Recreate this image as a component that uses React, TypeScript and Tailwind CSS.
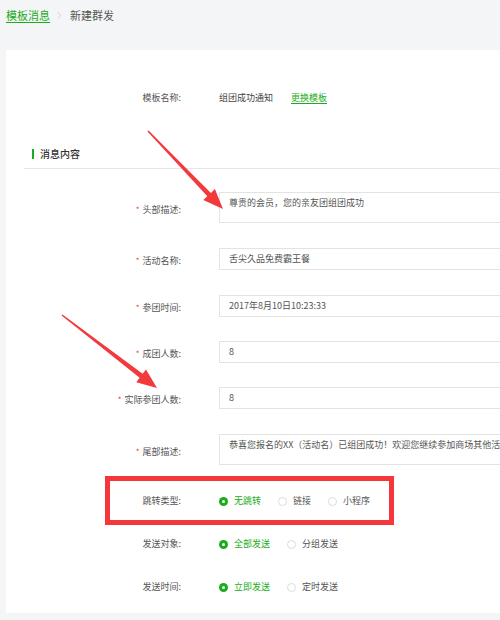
import React from "react";
import { ChevronRight } from "lucide-react";

function Label({ text, required }: { text: string; required?: boolean }) {
  return (
    <div className="w-[175px] shrink-0 text-right pt-[4px] text-[#555] whitespace-nowrap">
      {required && <span className="text-[#e0393e] mr-[3px] text-[8px]">*</span>}
      {text}:
    </div>
  );
}

function InputRow({
  label,
  value,
  multi,
  className,
}: {
  label: string;
  value: string;
  multi?: boolean;
  className: string;
}) {
  return (
    <div className={"flex items-center " + className}>
      <Label text={label} required />
      <div
        className={
          multi
            ? "ml-[38px] w-[320px] h-[31px] shrink-0 border border-[#e3e3e3] bg-white px-[9px] pt-[4px] leading-[12px] text-[#555] whitespace-nowrap overflow-hidden"
            : "ml-[38px] w-[320px] h-[22px] shrink-0 border border-[#e3e3e3] bg-white px-[9px] flex items-center text-[#555] whitespace-nowrap overflow-hidden"
        }
      >
        {value}
      </div>
    </div>
  );
}

function Radio({ checked, label }: { checked?: boolean; label: string }) {
  return (
    <div className="flex items-center gap-[6px]">
      {checked ? (
        <span className="w-[9px] h-[9px] rounded-full bg-[#1aad19] flex items-center justify-center">
          <span className="w-[3px] h-[3px] rounded-full bg-white" />
        </span>
      ) : (
        <span className="w-[9px] h-[9px] rounded-full border border-[#dcdcdc] bg-white" />
      )}
      <span className={checked ? "text-[#1aad19]" : "text-[#555]"}>{label}</span>
    </div>
  );
}

function RadioRow({
  label,
  options,
  className,
}: {
  label: string;
  options: string[];
  className: string;
}) {
  return (
    <div className={"flex items-center h-[14px] " + className}>
      <div className="w-[175px] shrink-0 text-right text-[#555] whitespace-nowrap">{label}:</div>
      <div className="ml-[38px] flex items-center gap-[17px]">
        {options.map((o, i) => (
          <Radio key={o} label={o} checked={i === 0} />
        ))}
      </div>
    </div>
  );
}

export default function App() {
  return (
    <div className="relative w-[500px] h-[620px] overflow-hidden bg-[#f4f5f7] font-['Noto_Sans_CJK_SC','Microsoft_YaHei',sans-serif]">
      {/* breadcrumb */}
      <div className="h-[50px] pl-[6px] pt-[7px] flex items-start text-[11px] leading-[16px]">
        <span className="text-[#1aad19] underline underline-offset-2">模板消息</span>
        <ChevronRight className="mx-[4px] mt-[3px] text-[#bdbdbd]" size={11} strokeWidth={1.5} />
        <span className="ml-[1px] text-[#555]">新建群发</span>
      </div>

      {/* card */}
      <div className="ml-[6px] bg-white overflow-hidden text-[9px] leading-[14px] pb-[19px]">
        <div className="flex items-center h-[14px] mt-[41px]">
          <div className="w-[175px] shrink-0 text-right text-[#555]">模板名称:</div>
          <div className="ml-[38px] text-[#444]">组团成功通知</div>
          <div className="ml-[18px] text-[#1aad19] underline underline-offset-2">更换模板</div>
        </div>

        <div className="mt-[42px] ml-[26px] flex items-center h-[14px]">
          <span className="w-[2px] h-[10px] bg-[#1aad19]" />
          <span className="ml-[6px] text-[10px] font-medium text-[#333]">消息内容</span>
        </div>
        <div className="mt-[7px] ml-[18px] h-px bg-[#e6e6e6]" />

        <InputRow className="mt-[23px]" label="头部描述" value="尊贵的会员，您的亲友团组团成功" multi />
        <InputRow className="mt-[25px]" label="活动名称" value="舌尖久品免费霸王餐" />
        <InputRow className="mt-[25px]" label="参团时间" value="2017年8月10日10:23:33" />
        <InputRow className="mt-[24px]" label="成团人数" value="8" />
        <InputRow className="mt-[24px]" label="实际参团人数" value="8" />
        <InputRow
          className="mt-[25px]"
          label="尾部描述"
          value="恭喜您报名的XX（活动名）已组团成功！欢迎您继续参加商场其他活动！"
          multi
        />

        <RadioRow className="mt-[29px]" label="跳转类型" options={["无跳转", "链接", "小程序"]} />
        <RadioRow className="mt-[29px]" label="发送对象" options={["全部发送", "分组发送"]} />
        <RadioRow className="mt-[29px]" label="发送时间" options={["立即发送", "定时发送"]} />
      </div>

      {/* annotation: red box */}
      <div className="absolute left-[105px] top-[476px] w-[289px] h-[49px] border-[5px] border-[#f5363a]" />

      {/* annotation: arrows */}
      <svg className="absolute left-0 top-0 pointer-events-none" width="500" height="620" viewBox="0 0 500 620">
        <polygon
          fill="#f2393b"
          points="147.46,131.52 207.3,196.3 203.3,200.1 223,209 214.9,189.1 210.9,192.9 148.54,130.48"
        />
        <polygon
          fill="#f2393b"
          points="61.54,315.59 139.62,377.8 136.27,382.16 157,388 146.01,369.48 142.66,373.84 62.46,314.41"
        />
      </svg>
    </div>
  );
}
